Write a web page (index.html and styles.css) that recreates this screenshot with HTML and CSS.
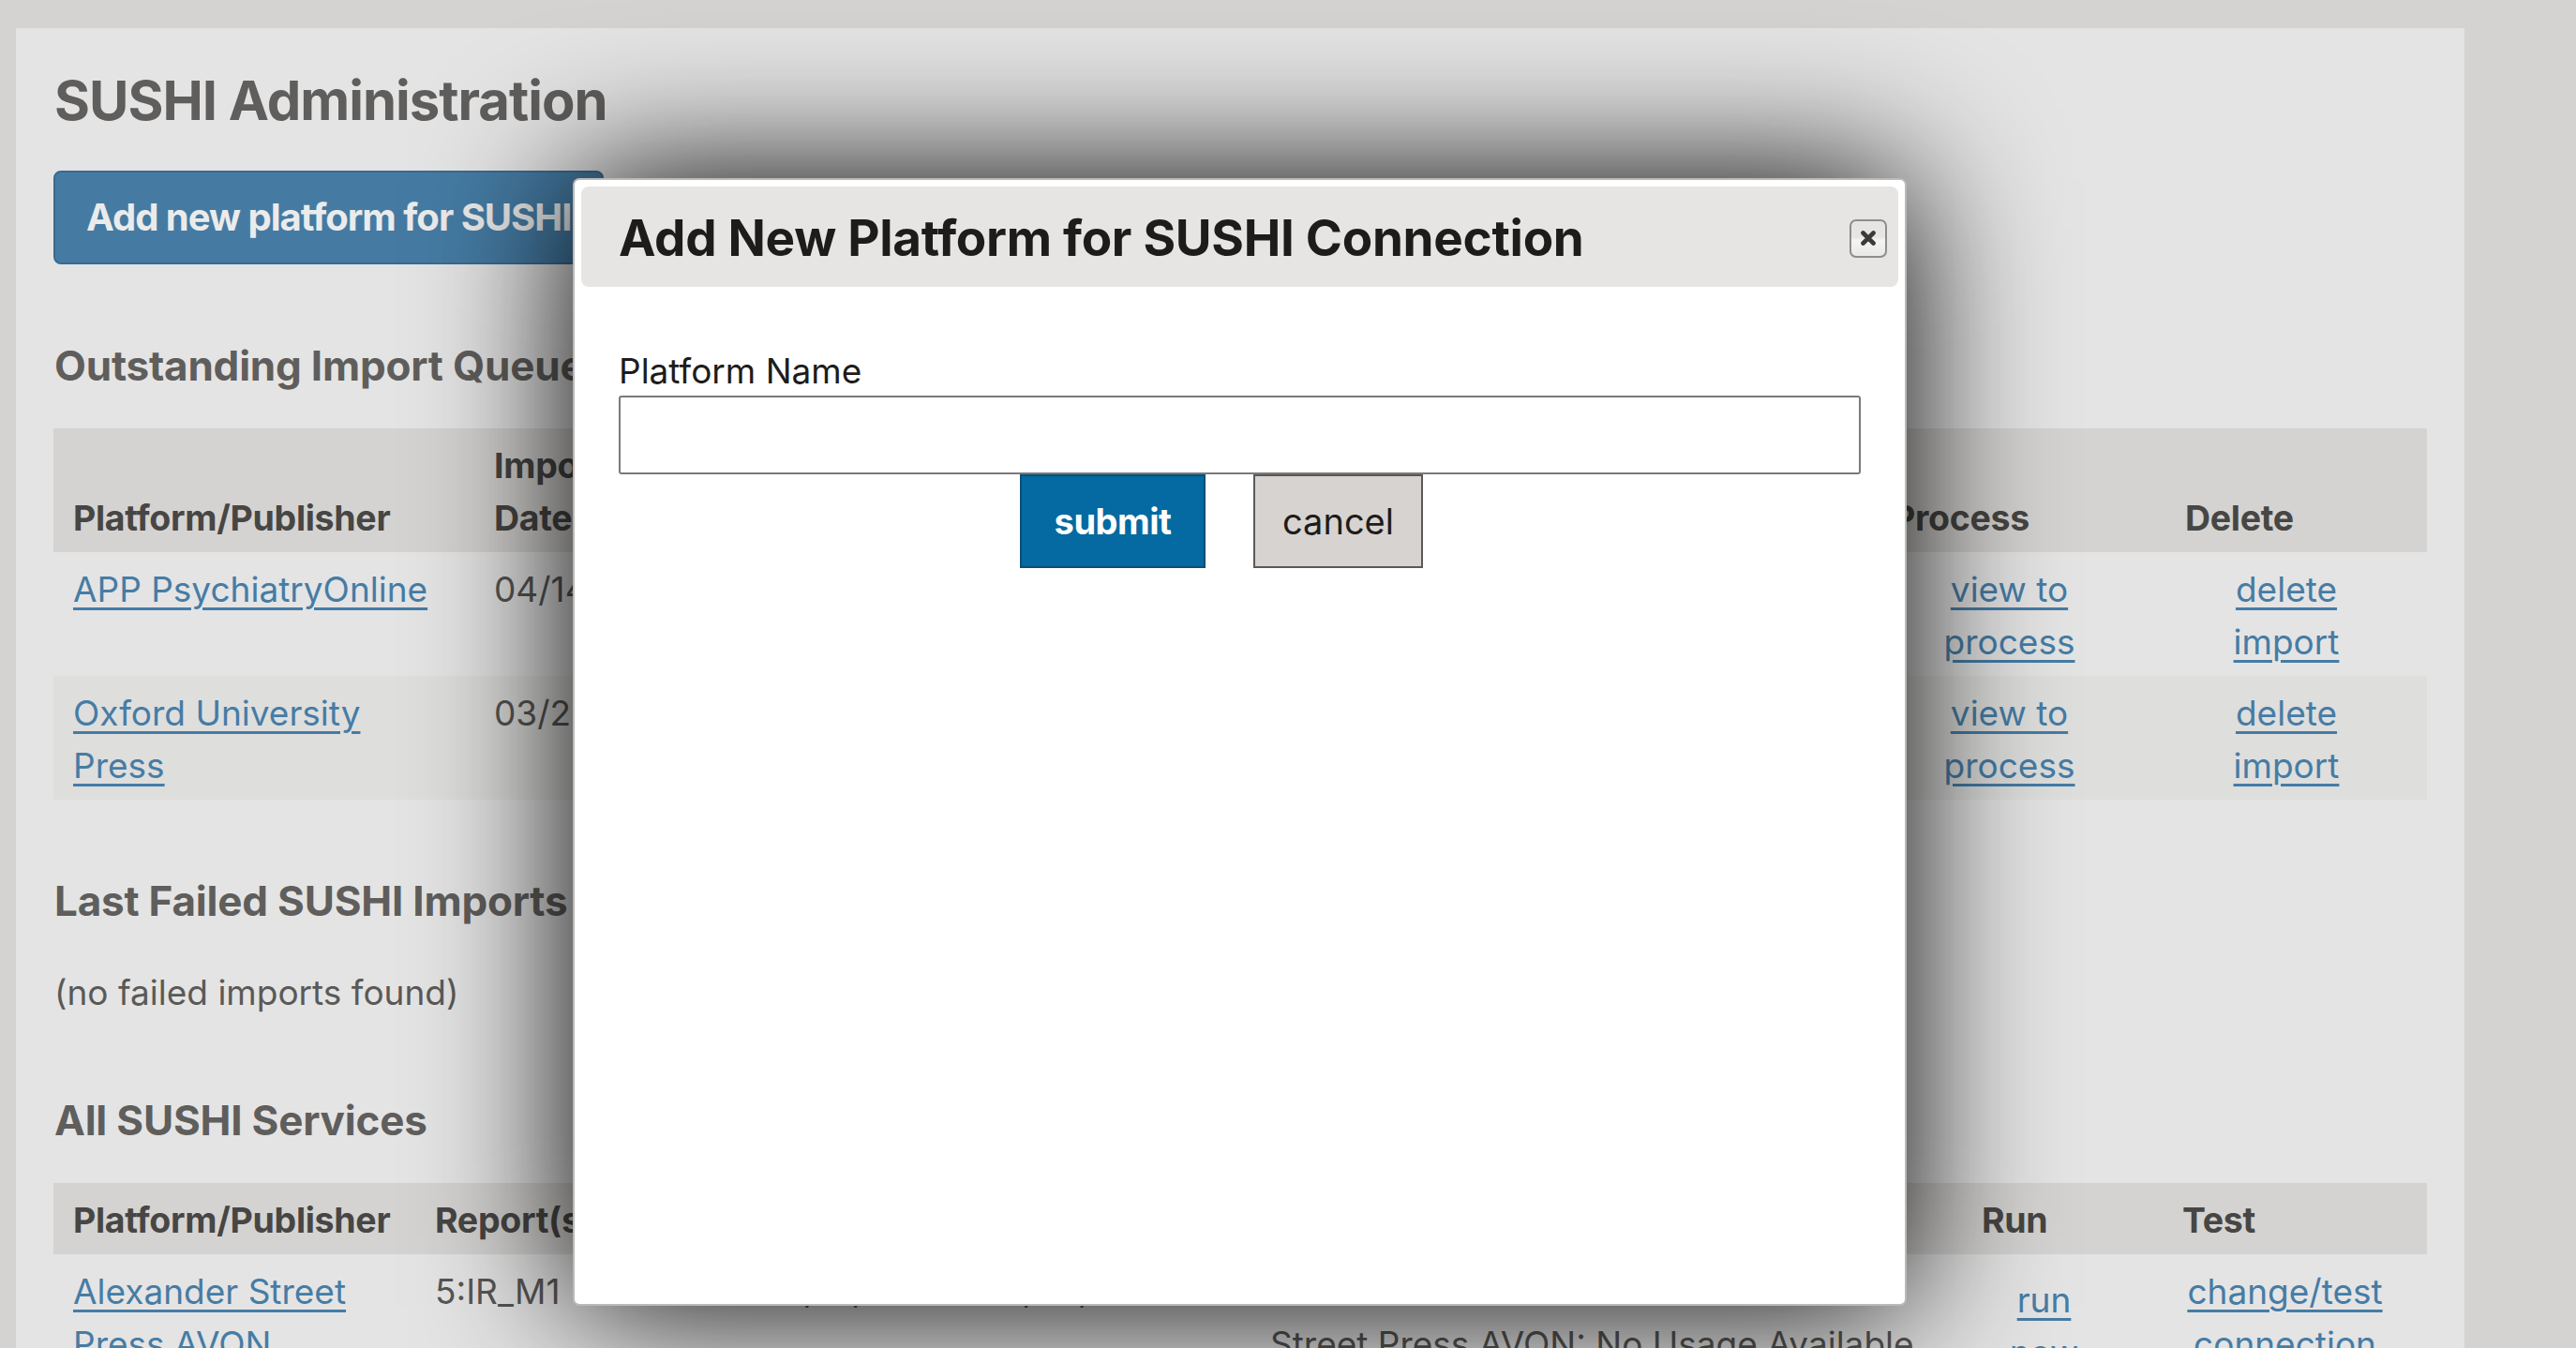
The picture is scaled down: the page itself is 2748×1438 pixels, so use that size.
FILE: index.html
```html
<!DOCTYPE html>
<html lang="en">
<head>
<meta charset="utf-8">
<title>SUSHI Administration</title>
<link rel="stylesheet" href="styles.css">
</head>
<body>
<div class="page">
  <h1 class="page-title">SUSHI Administration</h1>
  <div class="actions">
    <a class="btn-primary" href="#">Add new platform for SUSHI</a>
  </div>

  <h2 class="section-title">Outstanding Import Queue</h2>
  <table class="grid queue">
    <colgroup>
      <col class="q-pub"><col class="q-date"><col class="q-file"><col class="q-proc"><col class="q-del">
    </colgroup>
    <thead>
      <tr><th>Platform/Publisher</th><th>Import<br>Date</th><th>Import File</th><th>Process</th><th>Delete</th></tr>
    </thead>
    <tbody>
      <tr>
        <td><a href="#">APP PsychiatryOnline</a></td>
        <td>04/14/2021</td>
        <td>sushi_app_psychiatryonline.xml</td>
        <td class="center"><a href="#">view to<br>process</a></td>
        <td class="center"><a href="#">delete<br>import</a></td>
      </tr>
      <tr>
        <td><a href="#">Oxford University Press</a></td>
        <td>03/22/2021</td>
        <td>sushi_oxford_university_press.xml</td>
        <td class="center"><a href="#">view to<br>process</a></td>
        <td class="center"><a href="#">delete<br>import</a></td>
      </tr>
    </tbody>
  </table>

  <h2 class="section-title">Last Failed SUSHI Imports</h2>
  <p class="note">(no failed imports found)</p>

  <h2 class="section-title">All SUSHI Services</h2>
  <table class="grid services">
    <colgroup>
      <col class="s-pub"><col class="s-rep"><col class="s-range"><col class="s-status"><col class="s-run"><col class="s-test">
    </colgroup>
    <thead>
      <tr><th>Platform/Publisher</th><th>Report(s)</th><th>Date Range</th><th>Latest Run</th><th>Run</th><th>Test</th></tr>
    </thead>
    <tbody>
      <tr>
        <td><a href="#">Alexander Street Press AVON</a></td>
        <td>5:IR_M1</td>
        <td>04/01/2021 - 04/30/2021</td>
        <td>Status: Alexander<br>Street Press AVON: No Usage Available</td>
        <td class="center run-cell"><a href="#">run<br>now</a></td>
        <td class="center"><a href="#">change/test connection</a></td>
      </tr>
    </tbody>
  </table>
</div>

<div class="dialog" role="dialog" aria-labelledby="dlg-title">
  <div class="dialog-head">
    <span class="dialog-title" id="dlg-title">Add New Platform for SUSHI Connection</span>
    <button class="dialog-close" type="button" aria-label="close">
      <svg width="18" height="18" viewBox="0 0 18 18" aria-hidden="true"><path d="M3.5 3.5 L14.5 14.5 M14.5 3.5 L3.5 14.5" stroke="#3a3a3a" stroke-width="4.6" stroke-linecap="round" fill="none"/></svg>
    </button>
  </div>
  <div class="dialog-body">
    <label class="field-label" for="platformName">Platform Name</label>
    <input class="field-input" id="platformName" type="text">
    <div class="dialog-actions">
      <button class="btn-submit" type="button">submit</button>
      <button class="btn-cancel" type="button">cancel</button>
    </div>
  </div>
</div>
</body>
</html>
```
FILE: styles.css
```css
html, body {
  margin: 0;
  padding: 0;
  overflow: hidden;
}
body {
  background: #d4d3d1;
  font-family: Inter, "Noto Sans", "Liberation Sans", sans-serif;
  width: 2748px;
  height: 1438px;
  position: relative;
}
.page {
  margin: 30px 0 0 17px;
  width: 2612px;
  min-height: 1408px;
  box-sizing: border-box;
  padding: 42px 40px 0 40px;
  background: #e4e4e4;
}
.page-title {
  margin: 0;
  font-size: 58px;
  line-height: 70px;
  font-weight: 700;
  letter-spacing: -1px;
  color: #5f5e5c;
  padding-left: 1px;
}
.actions {
  margin-top: 40px;
}
.btn-primary {
  display: inline-block;
  background: #457ba3;
  color: #ebebeb;
  border: 2px solid #3b6a8f;
  border-radius: 8px;
  padding: 24px 33px;
  font-size: 40px;
  line-height: 48px;
  font-weight: 700;
  letter-spacing: -1px;
  text-decoration: none;
}
.section-title {
  margin: 82px 0 40px;
  font-size: 44px;
  line-height: 53px;
  font-weight: 700;
  letter-spacing: -0.2px;
  color: #5f5e5c;
  padding-left: 1px;
}
.note {
  margin: 43px 0 40px;
  font-size: 37px;
  line-height: 56px;
  color: #5a5957;
  padding-left: 1px;
}
.grid {
  width: 100%;
  border-collapse: collapse;
  table-layout: fixed;
  font-size: 37px;
  line-height: 56px;
  color: #575654;
}
.grid th,
.grid td {
  padding: 12px 21px 8px;
  text-align: left;
}
.grid th {
  background: #d4d3d1;
  color: #474644;
  font-size: 37.5px;
  font-weight: 700;
  letter-spacing: -0.3px;
  vertical-align: bottom;
}
.grid td {
  vertical-align: top;
}
.grid tbody tr:nth-child(even) td {
  background: #dededd;
}
.grid td.center {
  text-align: center;
  padding-right: 42px;
}
.grid td.run-cell {
  padding-top: 21px;
  padding-right: 60px;
}
.grid a {
  color: #467ca5;
  text-decoration: underline;
  text-decoration-thickness: 3px;
  text-underline-offset: 6px;
}
.q-pub { width: 449px; }
.q-date { width: 240px; }
.q-file { width: 1252px; }
.q-proc { width: 312px; }
.q-del { width: 279px; }
.s-pub { width: 386px; }
.s-rep { width: 347px; }
.s-range { width: 544px; }
.s-status { width: 759px; }
.s-run { width: 214px; }
.s-test { width: 282px; }

/* dialog */
.dialog {
  position: absolute;
  left: 611px;
  top: 190px;
  width: 1423px;
  height: 1203px;
  box-sizing: border-box;
  background: #ffffff;
  border: 2px solid #bcb9b6;
  border-radius: 7px;
  padding: 7px;
  box-shadow: 0 0 160px #000;
}
.dialog-head {
  height: 107px;
  box-sizing: border-box;
  background: #e6e5e3;
  border-radius: 8px;
  display: flex;
  align-items: center;
  justify-content: space-between;
  padding: 0 12px 0 40px;
}
.dialog-title {
  font-size: 53px;
  line-height: 64px;
  font-weight: 700;
  letter-spacing: -0.3px;
  color: #1e1c1a;
  padding-top: 2px;
}
.dialog-close {
  width: 40px;
  height: 41px;
  box-sizing: border-box;
  border: 2px solid #8d8d8d;
  border-radius: 7px;
  background: linear-gradient(#e6e5e3 0%, #e6e5e3 45%, #f4f4f3 55%, #e9e8e6 100%);
  padding: 0;
  display: flex;
  align-items: center;
  justify-content: center;
  margin-top: 3px;
}
.dialog-body {
  padding: 69px 40px 0;
}
.field-label {
  display: block;
  font-size: 37px;
  line-height: 42px;
  color: #1e1c1a;
  margin-bottom: 5px;
}
.field-input {
  display: block;
  width: 100%;
  height: 84px;
  box-sizing: border-box;
  border: 2px solid #7a7a7a;
  border-radius: 3px;
  background: #fff;
  margin: 0;
  font-size: 35px;
  font-family: inherit;
}
.dialog-actions {
  display: flex;
  justify-content: center;
  gap: 51px;
  padding-right: 39px;
}
.btn-submit,
.btn-cancel {
  height: 100px;
  box-sizing: border-box;
  padding: 0;
  font-family: inherit;
  font-size: 38px;
  line-height: 46px;
  border-radius: 0;
  margin: 0;
}
.btn-submit {
  width: 198px;
  background: #046aa1;
  color: #ffffff;
  font-weight: 700;
  letter-spacing: -0.5px;
  border: 2px solid #0b4f75;
}
.btn-cancel {
  width: 181px;
  background: #d7d3d0;
  color: #1e1c1a;
  font-weight: 400;
  border: 2px solid #5b5956;
}
```
